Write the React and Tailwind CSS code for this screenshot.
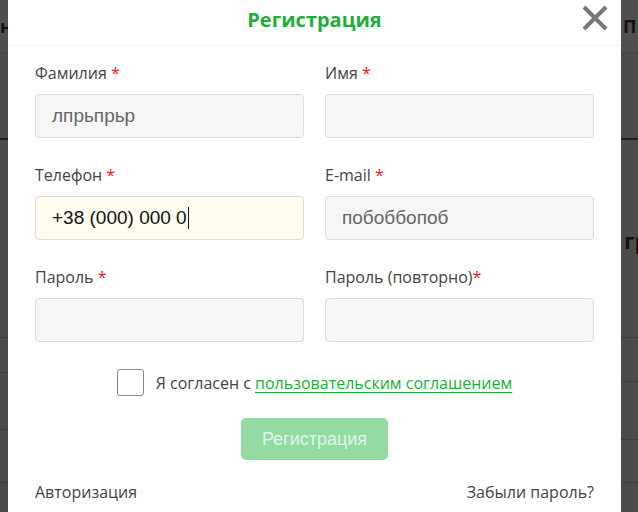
export default function App() {
  const label = "text-[16px] leading-[20px] text-[#444] font-['Open_Sans',sans-serif]";
  const input =
    "h-[44px] w-full rounded-[4px] border border-[#dcdcdc] bg-[#f6f6f6] px-[16px] flex items-center text-[19px] text-[#666] font-['Liberation_Sans',Arial,sans-serif]";
  const Star = () => <span className="text-[#e02020]"> *</span>;

  return (
    <div className="w-[638px] h-[512px] flex bg-[#4b4b4b] overflow-hidden">
      {/* left background strip */}
      <div className="w-[8px] shrink-0 flex flex-col overflow-hidden">
        <div className="h-[53px] bg-[#4f4f4f] flex items-center justify-end border-b border-[#444]">
          <span className="text-[18px] font-bold text-[#111] font-['Open_Sans',sans-serif] -mr-[4px]">н</span>
        </div>
        <div className="h-[87px] border-b-2 border-[#222]" />
        <div className="h-[198px] border-b border-[#3c3c3c]" />
        <div className="h-[35px] border-b border-[#3c3c3c]" />
        <div className="h-[57px] border-b border-[#3c3c3c]" />
        <div className="h-[53px] border-b border-[#3c3c3c]" />
      </div>

      {/* modal */}
      <div className="w-[613px] shrink-0 bg-white flex flex-col">
        <div className="relative h-[46px] border-b border-[#f2f2f2] flex items-center justify-center">
          <h1 className="text-[20px] font-bold text-[#1fae3b] font-['Open_Sans',sans-serif] -mt-[6px]">
            Регистрация
          </h1>
          <svg
            className="absolute right-[12px] top-[4px]"
            width="28"
            height="28"
            viewBox="0 0 28 28"
          >
            <path d="M3 3 L25 25 M25 3 L3 25" stroke="#777" strokeWidth="4" strokeLinecap="butt" />
          </svg>
        </div>

        <div className="px-[27px] pt-[17px] grid grid-cols-2 gap-x-[21px] gap-y-[27px]">
          <div className="flex flex-col gap-[11px]">
            <div className={label}>
              Фамилия<Star />
            </div>
            <div className={input}>лпрьпрьр</div>
          </div>
          <div className="flex flex-col gap-[11px]">
            <div className={label}>
              Имя<Star />
            </div>
            <div className={input}></div>
          </div>
          <div className="flex flex-col gap-[11px]">
            <div className={label}>
              Телефон<Star />
            </div>
            <div className="h-[44px] w-full rounded-[4px] border border-[#e2decb] bg-[#fffdf0] px-[16px] flex items-center text-[19px] text-[#111] font-['Liberation_Sans',Arial,sans-serif]">
              +38 (000) 000 0<span className="inline-block w-[1px] h-[22px] bg-[#111] ml-[1px]" />
            </div>
          </div>
          <div className="flex flex-col gap-[11px]">
            <div className={label}>
              E-mail<Star />
            </div>
            <div className={input}>побоббопоб</div>
          </div>
          <div className="flex flex-col gap-[11px]">
            <div className={label}>
              Пароль<Star />
            </div>
            <div className={input}></div>
          </div>
          <div className="flex flex-col gap-[11px]">
            <div className={label}>
              Пароль (повторно)<span className="text-[#e02020]">*</span>
            </div>
            <div className={input}></div>
          </div>
        </div>

        <div className="mt-[27px] flex items-center justify-center gap-[12px]">
          <div className="w-[27px] h-[27px] rounded-[3px] border border-[#888] bg-white" />
          <div className="text-[16px] text-[#444] font-['Open_Sans',sans-serif]">
            Я согласен с{" "}
            <span className="text-[#1fae3b] underline underline-offset-[3px]">
              пользовательским соглашением
            </span>
          </div>
        </div>

        <div className="mt-[22px] flex justify-center">
          <button className="w-[147px] h-[42px] rounded-[5px] bg-[#93dba3] text-[18px] text-[#e3f6e7] font-['Liberation_Sans',Arial,sans-serif]">
            Регистрация
          </button>
        </div>

        <div className="mt-[22px] px-[27px] flex justify-between text-[16px] leading-[20px] text-[#444] font-['Open_Sans',sans-serif]">
          <span>Авторизация</span>
          <span>Забыли пароль?</span>
        </div>
      </div>

      {/* right background strip */}
      <div className="flex-1 flex flex-col overflow-hidden">
        <div className="h-[53px] bg-[#4f4f4f] flex items-center pl-[2px] border-b border-[#444]">
          <span className="text-[18px] font-bold text-[#111] font-['Open_Sans',sans-serif]">П</span>
        </div>
        <div className="h-[87px] border-b-2 border-[#222]" />
        <div className="h-[198px] border-b border-[#3c3c3c] relative">
          <span className="absolute left-[3px] top-[84px] text-[22px] font-bold text-[#111] font-['Open_Sans',sans-serif]">гр</span>
        </div>
        <div className="h-[44px] border-b border-[#3c3c3c]" />
        <div className="h-[58px] border-b border-[#3c3c3c]" />
        <div className="h-[43px] border-b border-[#3c3c3c]" />
      </div>
    </div>
  );
}
